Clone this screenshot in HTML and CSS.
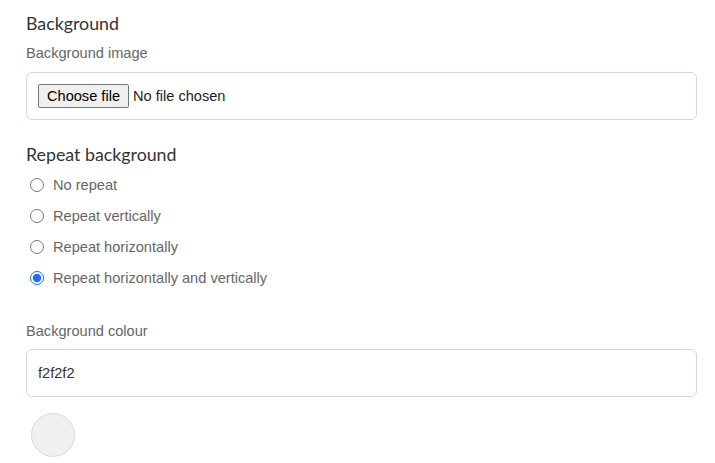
FILE: index.html
```html
<!DOCTYPE html>
<html>
<head>
<meta charset="utf-8">
<link rel="stylesheet" href="styles.css">
</head>
<body>
<div class="page">
  <h2 class="heading">Background</h2>
  <label class="label">Background image</label>
  <div class="field">
    <button type="button" class="file-btn">Choose file</button>
    <span class="file-name">No file chosen</span>
  </div>

  <h2 class="heading heading-repeat">Repeat background</h2>
  <div class="radios">
    <label class="radio"><input type="radio" name="rep"> <span>No repeat</span></label>
    <label class="radio"><input type="radio" name="rep"> <span>Repeat vertically</span></label>
    <label class="radio"><input type="radio" name="rep"> <span>Repeat horizontally</span></label>
    <label class="radio"><input type="radio" name="rep" checked> <span>Repeat horizontally and vertically</span></label>
  </div>

  <label class="label label-colour">Background colour</label>
  <div class="field field-text">f2f2f2</div>
  <div class="swatch"></div>
</div>
</body>
</html>
```

FILE: styles.css
```css
html, body {
  margin: 0;
  padding: 0;
  background: #fff;
}
.page {
  padding: 12px 18px 0 26px;
  font-family: "Liberation Sans", Arial, sans-serif;
  display: flex;
  flex-direction: column;
  align-items: flex-start;
}
.heading {
  font-family: Lato, sans-serif;
  font-weight: 400;
  font-size: 17.8px;
  line-height: 22px;
  color: #333;
  margin: 0 0 9px 0;
}
.label {
  font-size: 14.6px;
  line-height: 18px;
  color: #666;
  margin: 1px 0 10px 0;
}
.field {
  align-self: stretch;
  box-sizing: border-box;
  height: 48px;
  border: 1px solid #cfd8df;
  border-radius: 6px;
  padding: 0 11px;
  display: flex;
  align-items: center;
}
.file-btn {
  font-family: "Liberation Sans", Arial, sans-serif;
  font-size: 14.6px;
  color: #000;
  background: #efefef;
  border: 1px solid #767676;
  border-radius: 2px;
  height: 24px;
  width: 91px;
  padding: 0;
  margin: 0;
  text-align: center;
  line-height: 20px;
}
.file-name {
  font-size: 14.6px;
  color: #222;
  margin-left: 4px;
}
.heading-repeat {
  margin-top: 23px;
  margin-bottom: 4px;
}
.radios {
  display: flex;
  flex-direction: column;
}
.radio {
  display: flex;
  align-items: center;
  height: 31px;
  font-size: 14.6px;
  color: #666;
}
.radio input {
  width: 14px;
  height: 14px;
  margin: 0 9px 0 4px;
  accent-color: #1a73e8;
}
.label-colour {
  margin-top: 29px;
  margin-bottom: 9px;
}
.field-text {
  font-size: 14.6px;
  color: #333;
}
.swatch {
  margin: 16px 0 0 5px;
  width: 44px;
  height: 44px;
  box-sizing: border-box;
  border-radius: 50%;
  background: #f0f0f0;
  border: 1px solid #d3dbe1;
}
```
